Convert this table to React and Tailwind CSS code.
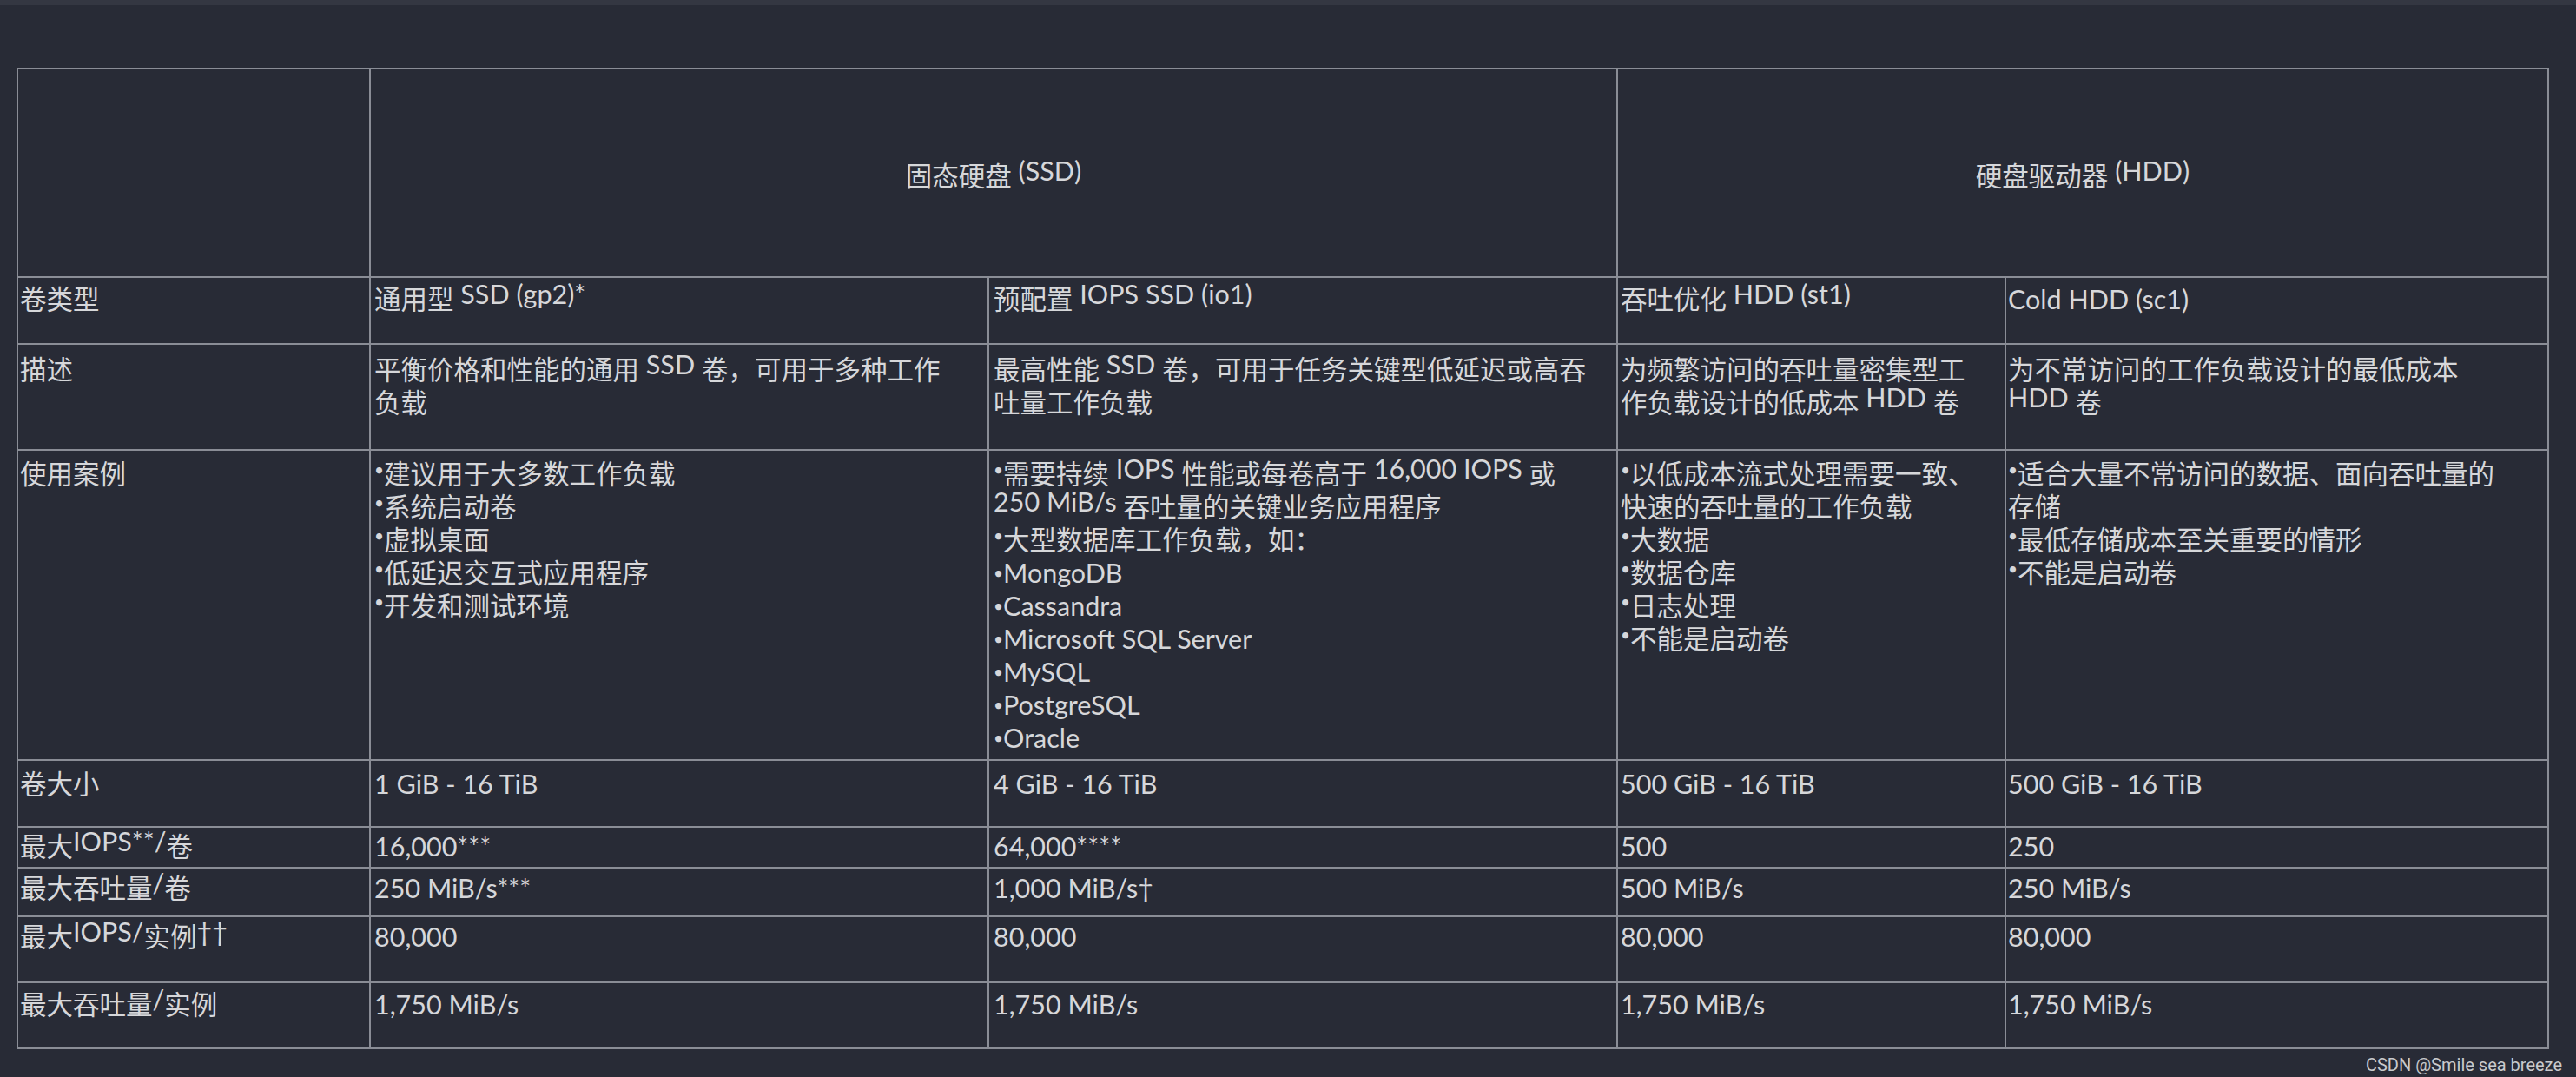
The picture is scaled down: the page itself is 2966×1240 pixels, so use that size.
import React from "react";

const CJK_SPLIT = /([\u2E80-\u9FFF\u3000-\u303F\uFF00-\uFFEF]+)/;
const CJK_TEST = /[\u2E80-\u9FFF\u3000-\u303F\uFF00-\uFFEF]/;

function Line({ text }) {
  let body = text;
  let bullet = null;
  if (body.startsWith("•")) {
    body = body.slice(1);
    const cjkNext = CJK_TEST.test(body.charAt(0));
    bullet = cjkNext ? (
      <span className="align-[9px] leading-[0px] text-[19px]">•</span>
    ) : (
      <span className="align-[4px] leading-[0px] text-[19px]">•</span>
    );
  }
  const hasCjk = CJK_TEST.test(body);
  const parts = body.split(CJK_SPLIT).filter((p) => p !== "");
  return (
    <div className="h-[38px] whitespace-nowrap">
      {bullet}
      {parts.map((p, i) => {
        if (CJK_TEST.test(p) || !hasCjk) return <span key={i}>{p}</span>;
        return (
          <span key={i} className="align-[6px] leading-[0px]">
            {p}
          </span>
        );
      })}
    </div>
  );
}

const colPad = ["pl-[2px]", "pl-[4px]", "pl-[5px]", "pl-[3px]", "pl-[2px]"];

const rows = [
  {
    pt: "pt-[5px]",
    cells: [
      ["卷类型"],
      ["通用型 SSD (gp2)*"],
      ["预配置 IOPS SSD (io1)"],
      ["吞吐优化 HDD (st1)"],
      ["Cold HDD (sc1)"],
    ],
  },
  {
    pt: "pt-[9px]",
    cells: [
      ["描述"],
      ["平衡价格和性能的通用 SSD 卷，可用于多种工作", "负载"],
      ["最高性能 SSD 卷，可用于任务关键型低延迟或高吞", "吐量工作负载"],
      ["为频繁访问的吞吐量密集型工", "作负载设计的低成本 HDD 卷"],
      ["为不常访问的工作负载设计的最低成本", "HDD 卷"],
    ],
  },
  {
    pt: "pt-[7px]",
    cells: [
      ["使用案例"],
      ["•建议用于大多数工作负载", "•系统启动卷", "•虚拟桌面", "•低延迟交互式应用程序", "•开发和测试环境"],
      [
        "•需要持续 IOPS 性能或每卷高于 16,000 IOPS 或",
        "250 MiB/s 吞吐量的关键业务应用程序",
        "•大型数据库工作负载，如：",
        "•MongoDB",
        "•Cassandra",
        "•Microsoft SQL Server",
        "•MySQL",
        "•PostgreSQL",
        "•Oracle",
      ],
      ["•以低成本流式处理需要一致、", "快速的吞吐量的工作负载", "•大数据", "•数据仓库", "•日志处理", "•不能是启动卷"],
      ["•适合大量不常访问的数据、面向吞吐量的", "存储", "•最低存储成本至关重要的情形", "•不能是启动卷"],
    ],
  },
  {
    pt: "pt-[7px]",
    cells: [["卷大小"], ["1 GiB - 16 TiB"], ["4 GiB - 16 TiB"], ["500 GiB - 16 TiB"], ["500 GiB - 16 TiB"]],
  },
  {
    pt: "pt-[2px]",
    cells: [["最大IOPS**/卷"], ["16,000***"], ["64,000****"], ["500"], ["250"]],
  },
  {
    pt: "pt-[3px]",
    cells: [["最大吞吐量/卷"], ["250 MiB/s***"], ["1,000 MiB/s†"], ["500 MiB/s"], ["250 MiB/s"]],
  },
  {
    pt: "pt-[3px]",
    cells: [["最大IOPS/实例††"], ["80,000"], ["80,000"], ["80,000"], ["80,000"]],
  },
  {
    pt: "pt-[5px]",
    cells: [["最大吞吐量/实例"], ["1,750 MiB/s"], ["1,750 MiB/s"], ["1,750 MiB/s"], ["1,750 MiB/s"]],
  },
];

export default function App() {
  return (
    <div className="flex flex-col w-[2966px] h-[1240px] overflow-hidden bg-[#282b36] text-[#d6d7da] font-['Lato','Noto_Sans_CJK_SC',sans-serif] text-[30.5px] leading-[38px]">
      <div className="h-[6px] bg-[#343742]" />
      <div className="pt-[72px] pl-[19px]">
        <div className="grid w-[2916px] grid-cols-[404px_710px_722px_445px_623px] grid-rows-[238px_75px_120px_355px_75px_45px_54px_74px_74px] gap-[2px] p-[2px] bg-[#8a8d96]">
          <div className="bg-[#282b36]" />
          <div className="col-span-2 flex items-center justify-center pt-[6px] bg-[#282b36]">
            <Line text="固态硬盘 (SSD)" />
          </div>
          <div className="col-span-2 flex items-center justify-center pt-[6px] bg-[#282b36]">
            <Line text="硬盘驱动器 (HDD)" />
          </div>
          {rows.map((row, r) =>
            row.cells.map((lines, c) => (
              <div key={r + "-" + c} className={"bg-[#282b36] " + row.pt + " " + colPad[c]}>
                {lines.map((t, k) => (
                  <Line key={k} text={t} />
                ))}
              </div>
            ))
          )}
        </div>
      </div>
      <div className="flex justify-end pr-[16px] pt-[6px] font-['Roboto',sans-serif] text-[20px] leading-[24px] text-[#c9cacd]">
        CSDN @Smile sea breeze
      </div>
    </div>
  );
}
